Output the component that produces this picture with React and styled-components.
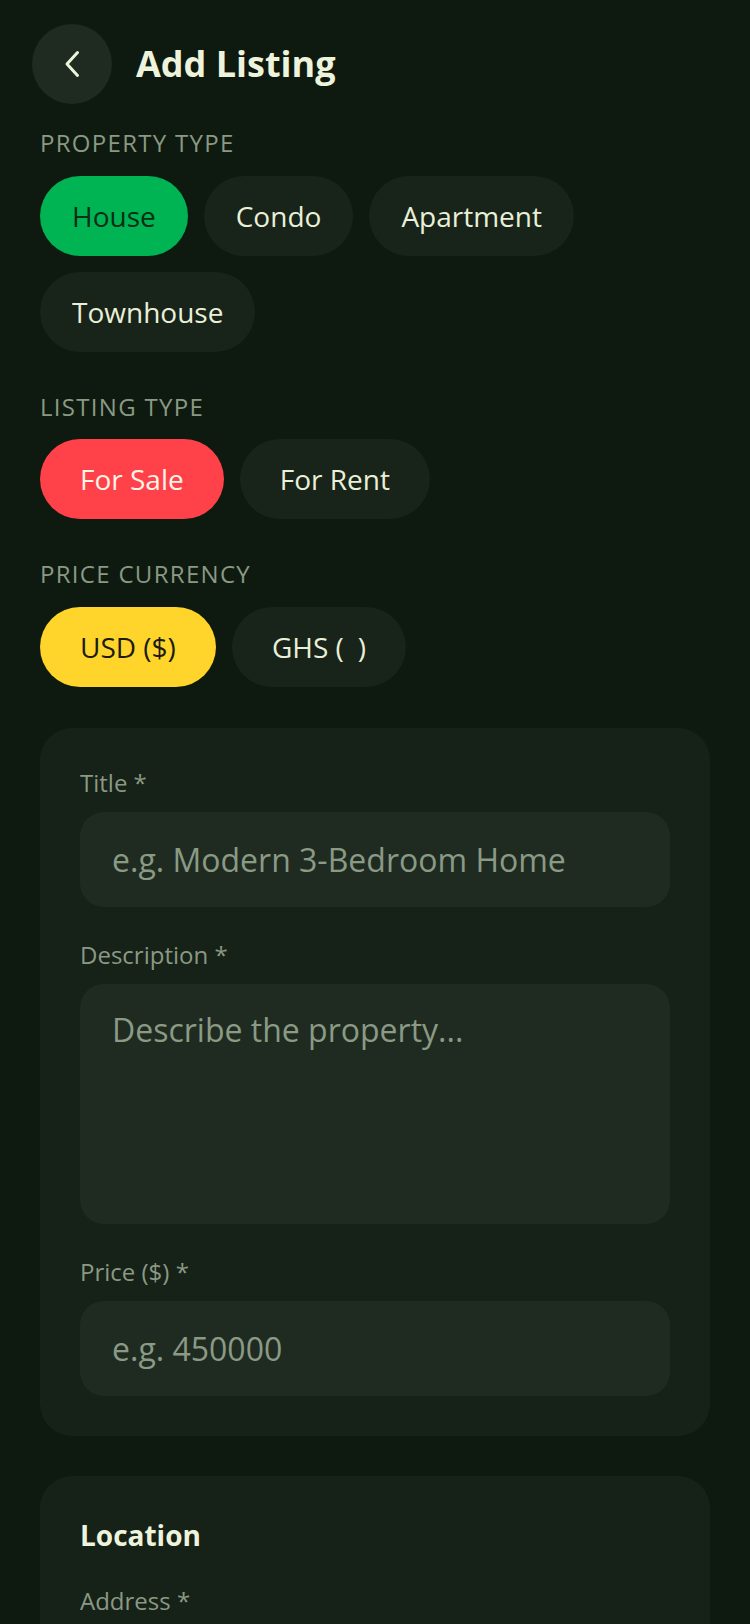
import React from "react";
import styled, { createGlobalStyle } from "styled-components";

const GlobalStyle = createGlobalStyle`
  html, body {
    margin: 0;
    padding: 0;
    background: #0e1a10;
  }
  body {
    font-family: "Open Sans", "Noto Sans", sans-serif;
    color: #eef3dc;
  }
  * {
    box-sizing: border-box;
  }
`;

const Page = styled.div`
  min-height: 1624px;
  background: #0e1a10;
  overflow: hidden;
`;

const Header = styled.header`
  display: flex;
  align-items: center;
  gap: 24px;
  padding: 24px 32px 0;
  margin-bottom: 22px;
`;

const BackButton = styled.button`
  width: 80px;
  height: 80px;
  border-radius: 50%;
  border: none;
  background: #1f2a20;
  display: flex;
  align-items: center;
  justify-content: center;
  padding: 0;
  cursor: pointer;
`;

const Title = styled.h1`
  margin: 0;
  font-size: 36px;
  font-weight: 700;
  line-height: 1.2;
  color: #eef3dc;
`;

const Content = styled.main`
  display: flex;
  flex-direction: column;
  padding: 0 40px;
`;

const Section = styled.section`
  margin-bottom: ${props => props.$spacing || 38}px;
`;

const SectionLabel = styled.div`
  font-size: 24px;
  line-height: 1.4;
  letter-spacing: 1.3px;
  text-transform: uppercase;
  color: #8a9983;
  margin-bottom: 16px;
`;

const ChipRow = styled.div`
  display: flex;
  flex-wrap: wrap;
  gap: 16px;
`;

const chipColors = {
  green: { bg: "#00b454", fg: "#0a2e15" },
  red: { bg: "#ff4249", fg: "#fdf4e8" },
  yellow: { bg: "#ffd52b", fg: "#1b1c0e" }
};

const Chip = styled.button`
  height: 80px;
  padding: 0 ${props => (props.$wide ? 40 : 32)}px;
  border: none;
  border-radius: 40px;
  font-family: "Open Sans", "Noto Sans", sans-serif;
  font-size: 28px;
  white-space: pre;
  background: ${props =>
    props.$tone ? chipColors[props.$tone].bg : "#18231a"};
  color: ${props => (props.$tone ? chipColors[props.$tone].fg : "#eaf0d8")};
  cursor: pointer;
`;

const Card = styled.div`
  background: #162118;
  border-radius: 32px;
  padding: 40px;
  display: flex;
  flex-direction: column;
  margin-bottom: 40px;
`;

const CardHeading = styled.h2`
  margin: 0 0 31px;
  font-size: 28px;
  font-weight: 700;
  line-height: 1.4;
  color: #eef3dc;
`;

const Field = styled.div`
  display: flex;
  flex-direction: column;
  gap: 14px;
  & + & {
    margin-top: 33px;
  }
`;

const FieldLabel = styled.label`
  font-size: 24px;
  line-height: 1.25;
  color: #8a9983;
`;

const TextInput = styled.input`
  height: 95px;
  border: none;
  outline: none;
  border-radius: 24px;
  background: #1f2b21;
  padding: 0 32px;
  font-family: "Open Sans", "Noto Sans", sans-serif;
  font-size: 32px;
  color: #eef3dc;
  &::placeholder {
    color: #8a9a85;
  }
`;

const TextArea = styled.textarea`
  height: 240px;
  border: none;
  outline: none;
  resize: none;
  border-radius: 24px;
  background: #1f2b21;
  padding: 24px 32px;
  font-family: "Open Sans", "Noto Sans", sans-serif;
  font-size: 32px;
  color: #eef3dc;
  &::placeholder {
    color: #8a9a85;
  }
`;

const ChevronLeft = () => (
  <svg width="16" height="28" viewBox="0 0 16 28" fill="none">
    <path
      d="M13.5 2.5 L3 14 L13.5 25.5"
      stroke="#eef3dc"
      strokeWidth="3"
      strokeLinecap="round"
      strokeLinejoin="round"
    />
  </svg>
);

const propertyTypes = ["House", "Condo", "Apartment", "Townhouse"];
const listingTypes = ["For Sale", "For Rent"];
const currencies = ["USD ($)", "GHS (\u2002)"];

export default function App() {
  const [property, setProperty] = React.useState("House");
  const [listing, setListing] = React.useState("For Sale");
  const [currency, setCurrency] = React.useState("USD ($)");

  return (
    <Page>
      <GlobalStyle />
      <Header>
        <BackButton aria-label="Back">
          <ChevronLeft />
        </BackButton>
        <Title>Add Listing</Title>
      </Header>

      <Content>
        <Section>
          <SectionLabel>Property Type</SectionLabel>
          <ChipRow>
            {propertyTypes.map(t => (
              <Chip
                key={t}
                $tone={t === property ? "green" : null}
                onClick={() => setProperty(t)}
              >
                {t}
              </Chip>
            ))}
          </ChipRow>
        </Section>

        <Section>
          <SectionLabel>Listing Type</SectionLabel>
          <ChipRow>
            {listingTypes.map(t => (
              <Chip
                key={t}
                $wide
                $tone={t === listing ? "red" : null}
                onClick={() => setListing(t)}
              >
                {t}
              </Chip>
            ))}
          </ChipRow>
        </Section>

        <Section $spacing={41}>
          <SectionLabel>Price Currency</SectionLabel>
          <ChipRow>
            {currencies.map(c => (
              <Chip
                key={c}
                $wide
                $tone={c === currency ? "yellow" : null}
                onClick={() => setCurrency(c)}
              >
                {c}
              </Chip>
            ))}
          </ChipRow>
        </Section>

        <Card>
          <Field>
            <FieldLabel>Title *</FieldLabel>
            <TextInput placeholder="e.g. Modern 3-Bedroom Home" />
          </Field>
          <Field>
            <FieldLabel>Description *</FieldLabel>
            <TextArea placeholder="Describe the property..." />
          </Field>
          <Field>
            <FieldLabel>Price ($) *</FieldLabel>
            <TextInput placeholder="e.g. 450000" />
          </Field>
        </Card>

        <Card>
          <CardHeading>Location</CardHeading>
          <Field>
            <FieldLabel>Address *</FieldLabel>
            <TextInput placeholder="e.g. 12 Independence Ave" />
          </Field>
          <Field>
            <FieldLabel>City *</FieldLabel>
            <TextInput placeholder="e.g. Accra" />
          </Field>
        </Card>
      </Content>
    </Page>
  );
}
